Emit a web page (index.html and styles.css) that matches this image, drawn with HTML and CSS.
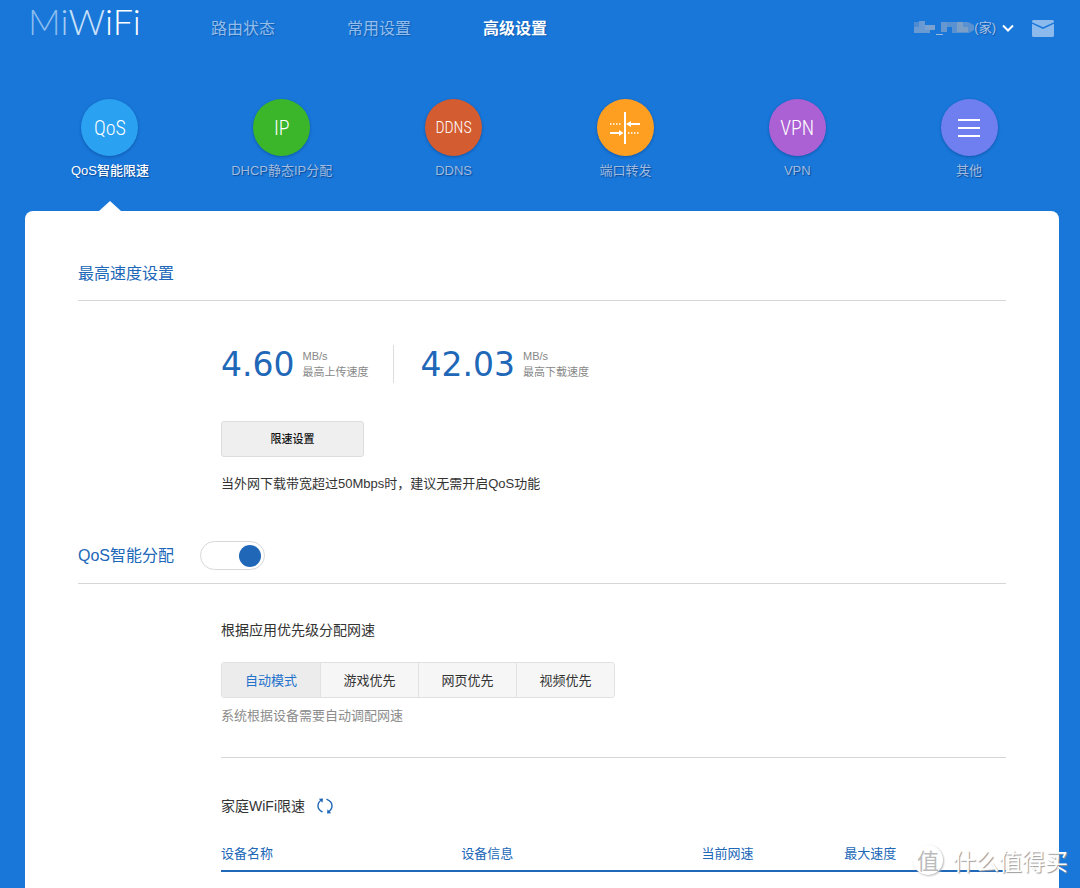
FILE: index.html
```
<!DOCTYPE html>
<html lang="zh-CN">
<head>
<meta charset="utf-8">
<title>MiWiFi</title>
<meta name="viewport" content="width=device-width, initial-scale=1">
<link rel="stylesheet" href="styles.css">
</head>
<body>
<header class="topbar">
  <a class="logo" href="#"><span class="logo-1">M</span><span class="logo-2">i</span><span class="logo-3">W</span><span class="logo-4">iFi</span></a>
  <nav class="main-nav">
    <a href="#">路由状态</a>
    <a href="#">常用设置</a>
    <a href="#" class="current">高级设置</a>
  </nav>
  <div class="account">
    <button class="router" type="button">
      <svg class="masked" width="60" height="16" viewBox="0 0 60 16" aria-hidden="true">
        <path fill="#4e8bd0" d="M0 2h5V1h6v12H0z"/>
        <path fill="#6a9ad2" d="M5 1h6v5h5v7H0V7h5z"/>
        <path fill="#79a2d0" d="M11 5h10v5H11z"/>
        <path fill="#a0b9d5" d="M22 14h7v1h-7z"/>
        <path fill="#6797d0" d="M27 2h11v5h-5v5h-6z"/>
        <path fill="#5a91d1" d="M33 2h21l6 3v5l-5 3H38V7h-5z"/>
        <path fill="#7c9fc8" d="M43 2h6v5h5v5H43z"/>
      </svg>
      <span>(家)</span>
      <svg class="chevron" width="12" height="8" viewBox="0 0 12 8" aria-hidden="true"><path d="M1 1.500 6 6.500l5-5"/></svg>
    </button>
    <button class="mail" type="button" aria-label="消息">
      <svg width="22" height="17" viewBox="0 0 22 17" aria-hidden="true">
        <path d="M1.500 0h19Q22 0 22 1.500v.8L11 7.200 0 2.300v-.8Q0 0 1.500 0z"/>
        <path d="M0 3.700 11 9l11-5.300v11.800q0 1.500-1.500 1.500h-19Q0 17 0 15.500z"/>
      </svg>
    </button>
  </div>
</header>

<nav class="sub-nav">
  <a href="#" class="current"><span class="disc qos">QoS</span>QoS智能限速</a>
  <a href="#"><span class="disc ip">IP</span>DHCP静态IP分配</a>
  <a href="#"><span class="disc ddns">DDNS</span>DDNS</a>
  <a href="#"><span class="disc port"><svg width="32" height="34" viewBox="0 0 32 34" aria-hidden="true">
    <path d="M16 1v32M19 13h12M1 22h10" stroke="#fff" stroke-width="2"/>
    <path d="M1 13h12M19 22h12" stroke="#fff" stroke-width="1.500" stroke-dasharray="1.500 1.500"/>
    <path d="M17 13l5-3v6zM14.500 22l-4.500-3v6z" fill="#fff"/>
  </svg></span>端口转发</a>
  <a href="#"><span class="disc vpn">VPN</span>VPN</a>
  <a href="#"><span class="disc more"><svg width="22" height="20" viewBox="0 0 22 20" aria-hidden="true"><path d="M0 2h22M0 10h22M0 18h22" stroke="#fff" stroke-width="2"/></svg></span>其他</a>
</nav>

<main class="panel">
  <section>
    <div class="section-head"><h2>最高速度设置</h2></div>
    <div class="content">
      <div class="speeds">
        <div class="speed"><strong>4.60</strong><p>MB/s<br>最高上传速度</p></div>
        <div class="speed"><strong>42.03</strong><p>MB/s<br>最高下载速度</p></div>
      </div>
      <button class="limit" type="button">限速设置</button>
      <p class="note">当外网下载带宽超过50Mbps时，建议无需开启QoS功能</p>
    </div>
  </section>

  <section>
    <div class="section-head with-switch">
      <h2><label for="qos-switch">QoS智能分配</label></h2>
      <input class="switch" id="qos-switch" type="checkbox" role="switch" checked>
    </div>
    <div class="content">
      <h3 class="mode-title">根据应用优先级分配网速</h3>
      <div class="modes">
        <button type="button" class="active">自动模式</button>
        <button type="button">游戏优先</button>
        <button type="button">网页优先</button>
        <button type="button">视频优先</button>
      </div>
      <p class="tip">系统根据设备需要自动调配网速</p>
      <div class="devices-head">
        <h3>家庭WiFi限速</h3>
        <button class="refresh" type="button" aria-label="刷新">
          <svg width="16" height="16" viewBox="0 0 16 16" aria-hidden="true">
            <path class="arc" d="M5.500 14C2.300 12.500 1 10.500 1 8c0-2.600 1.300-4.800 3.500-6M9.500 1.200C13.200 2.800 15 5 15 7.800c0 2.600-1.300 4.700-3.500 6"/>
            <path class="tip-arrow" d="M1.800.8 6 .5l-.5 4.200zM14.200 15.200l-4.200.3.500-4.200z"/>
          </svg>
        </button>
      </div>
      <table class="devices">
        <thead><tr><th class="name">设备名称</th><th class="info">设备信息</th><th class="now">当前网速</th><th>最大速度</th></tr></thead>
      </table>
    </div>
  </section>
</main>

<div class="watermark"><span class="seal">值</span><span>什么值得买</span></div>
</body>
</html>
```
FILE: styles.css
```
* {
  box-sizing: border-box;
}

body {
  display: flex;
  flex-direction: column;
  min-height: 100vh;
  margin: 0;
  background: #1877d9;
  color: #333;
  font: 13px/20px "Liberation Sans", "Noto Sans CJK SC", sans-serif;
}

h2, h3, p {
  margin: 0;
  font-weight: 400;
}

a {
  color: inherit;
  text-decoration: none;
}

button {
  padding: 0;
  border: 0;
  background: none;
  color: inherit;
  font: inherit;
  cursor: pointer;
}

svg {
  display: block;
}

/* top bar */
.topbar {
  display: flex;
  align-items: center;
  height: 56px;
  padding: 0 26px 0 28px;
}

.logo {
  width: 183px;
  height: 56px;
  color: #fff;
  font: 300 36px/42px Lato, sans-serif;
}

.logo-1 { color: #8bbcee; }
.logo-2 { color: #a3cbf2; }
.logo-3 { color: #c8e0f8; }

.main-nav {
  display: flex;
  gap: 72px;
  color: #93bdeb;
  font-size: 16px;
  line-height: 22px;
  padding-top: 2px;
  text-shadow: 1px 1px 1px rgba(0, 40, 100, .35);
}

.main-nav .current {
  color: #fff;
  font-weight: 700;
}

.account {
  display: flex;
  align-items: center;
  gap: 18px;
  margin-left: auto;
}

.router {
  display: flex;
  align-items: center;
  color: #a9c3e4;
  text-shadow: 1px 1px 1px rgba(0, 40, 100, .4);
}

.chevron {
  margin-left: 6px;
  fill: none;
  stroke: #fff;
  stroke-width: 2;
}

.mail {
  fill: #8dbaed;
}

/* icon navigation */
.sub-nav {
  display: grid;
  grid-template-columns: repeat(6, 1fr);
  padding: 43px 25px 30px 24px;
  color: #9fbbe0;
  text-shadow: 1px 1px 1px rgba(0, 30, 90, .5);
}

.sub-nav a {
  position: relative;
  display: flex;
  flex-direction: column;
  align-items: center;
  gap: 5px;
}

.sub-nav .current {
  color: #fff;
  font-weight: 500;
}

.sub-nav .current::after {
  content: "";
  position: absolute;
  bottom: -30px;
  border: 11px solid transparent;
  border-top-width: 0;
  border-bottom: 10px solid #fff;
}

.disc {
  display: flex;
  align-items: center;
  justify-content: center;
  width: 57px;
  height: 57px;
  border-radius: 50%;
  box-shadow: 0 1px 3px rgba(0, 30, 90, .35);
  color: #fff;
  font: 300 20px/24px "Roboto Condensed", "Open Sans Condensed", Roboto, sans-serif;
  text-shadow: none;
}

.qos { background: #2aa1f1; }
.ip { background: #3bb62b; }
.ddns { background: #d35c30; font-size: 16px; }
.port { background: #ff9f22; }
.vpn { background: #ab61d4; }
.more { background: #707ff0; }

/* panel */
.panel {
  flex: 1;
  margin: 0 21px 0 25px;
  padding: 50px 53px 16px;
  border-radius: 8px 8px 0 0;
  background: #fff;
}

.section-head {
  display: flex;
  align-items: center;
  gap: 26px;
  padding: 1px 0 14px;
  border-bottom: 1px solid #d6d6d6;
}

.section-head h2 {
  color: #2067b8;
  font-size: 16px;
  line-height: 24px;
}

.with-switch {
  margin-top: 46px;
  padding-bottom: 13px;
}

.content {
  margin-left: 143px;
}

.speeds {
  display: flex;
  height: 38px;
  margin: 44px 0 38px;
}

.speed {
  display: flex;
  align-items: center;
  gap: 8px;
}

.speed + .speed {
  margin-left: 25px;
  padding-left: 26px;
  border-left: 1px solid #ddd;
}

.speed strong {
  padding-top: 2px;
  color: #2067b8;
  font: 33px/36px "DejaVu Sans", sans-serif;
}

.speed p {
  color: #888;
  font-size: 11px;
  line-height: 16px;
}

.limit {
  display: block;
  width: 143px;
  height: 36px;
  border: 1px solid #ddd;
  border-radius: 3px;
  background: #efefef;
  color: #111;
  font-size: 11px;
  font-weight: 500;
}

.note {
  margin-top: 17px;
}

.switch {
  appearance: none;
  display: flex;
  align-items: center;
  justify-content: flex-end;
  width: 65px;
  height: 29px;
  margin: 0;
  padding: 0 3px;
  border: 1px solid #d8d8d8;
  border-radius: 15px;
  background: #fff;
}

.switch::before {
  content: "";
  width: 22px;
  height: 22px;
  border-radius: 50%;
  background: #2067b8;
}

.switch:not(:checked) {
  justify-content: flex-start;
}

h3 {
  font-size: 14px;
  line-height: 20px;
}

.mode-title {
  margin: 36px 0 22px;
}

.modes {
  display: inline-flex;
  vertical-align: top;
  overflow: hidden;
  border: 1px solid #e1e1e1;
  border-radius: 3px;
}

.modes button {
  width: 98px;
  height: 34px;
  padding-top: 1px;
  background: #f6f6f6;
}

.modes button + button {
  border-left: 1px solid #e1e1e1;
}

.modes .active {
  background: #ececec;
  color: #2272cc;
}

.tip {
  margin-top: 8px;
  padding-bottom: 31px;
  border-bottom: 1px solid #d6d6d6;
  color: #8c8c8c;
}

.devices-head {
  display: flex;
  align-items: center;
  gap: 12px;
  margin: 38px 0 28px;
}

.arc {
  fill: none;
  stroke: #2067b8;
  stroke-width: 1.4;
}

.tip-arrow {
  fill: #2067b8;
}

.devices {
  width: 100%;
  table-layout: fixed;
  border-collapse: collapse;
}

.devices th {
  padding: 0 0 6px;
  border-bottom: 2px solid #2067b8;
  color: #2067b8;
  font-weight: 400;
  text-align: left;
}

.devices .name, .devices .info { width: 30.6%; }
.devices .now { width: 18.2%; }

/* site watermark over the page corner */
.watermark {
  position: absolute;
  right: 12px;
  bottom: 13px;
  display: flex;
  align-items: center;
  gap: 10px;
  color: #fff;
  font: 400 23px/30px "Noto Sans CJK SC", sans-serif;
  text-shadow: 1px 1px 1px #999;
}

.seal {
  width: 30px;
  height: 30px;
  border-radius: 50%;
  background: #fff;
  box-shadow: 1px 1px 2px #bbb;
  color: #bbb;
  font-size: 22px;
  line-height: 28px;
  text-align: center;
  text-shadow: none;
}
```
